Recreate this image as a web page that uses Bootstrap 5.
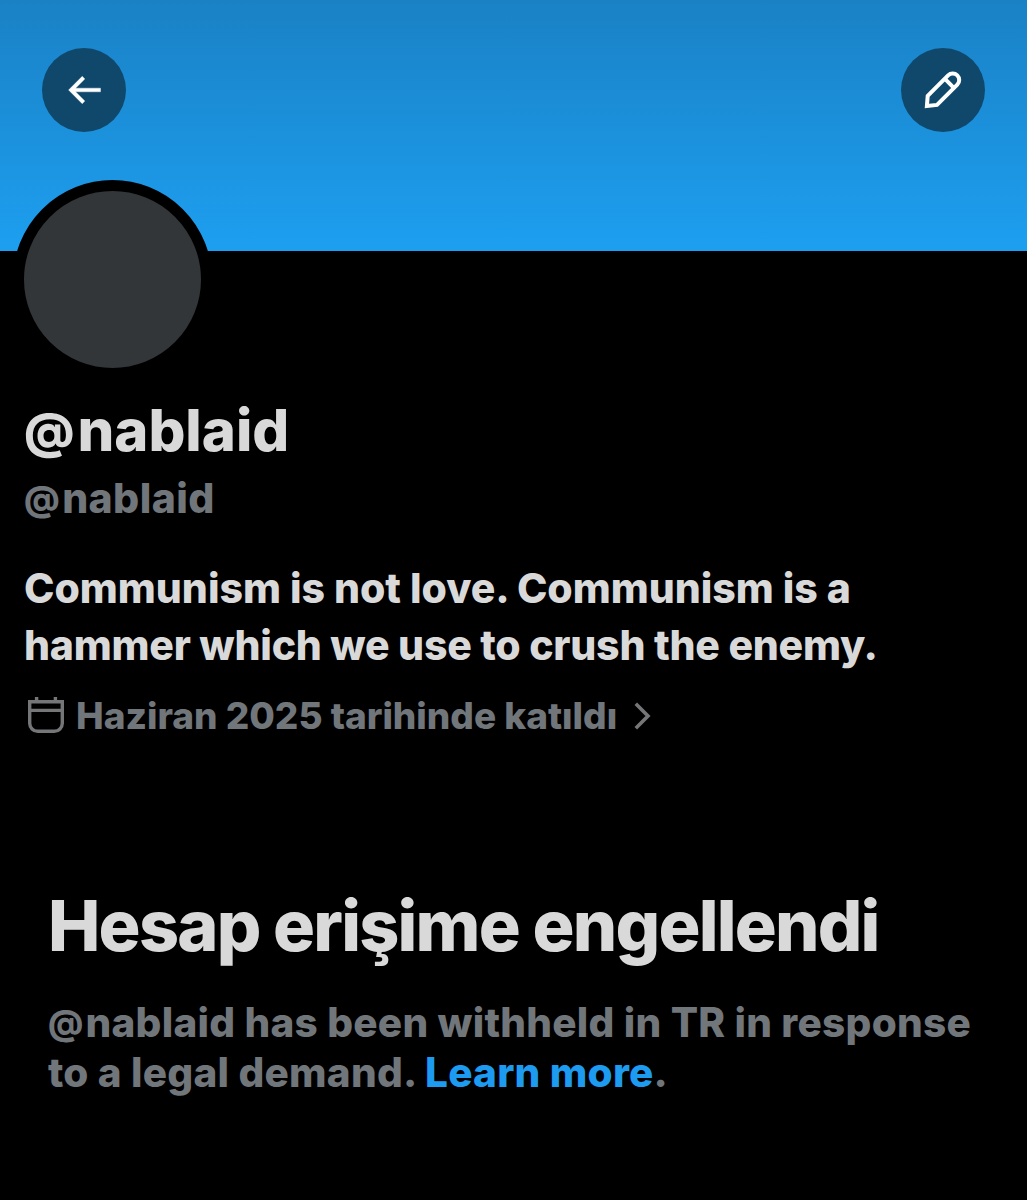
<!DOCTYPE html>
<html lang="tr">
<head>
<meta charset="utf-8">
<meta name="viewport" content="width=device-width, initial-scale=1">
<title>@nablaid</title>
<link rel="stylesheet" href="https://cdn.jsdelivr.net/npm/bootstrap@5.3.0/dist/css/bootstrap.min.css">
<style>
body{background:#000;color:#d9d9d9;font-family:Inter,"Liberation Sans",sans-serif;font-weight:800;min-height:1200px;overflow-x:hidden}
.banner{height:251px;padding:48px 42px;background:linear-gradient(#1a81c5,#1d9ff0)}
.round-btn{width:84px;height:84px;background:#10486b;border:0;padding:0}
.avatar{width:199px;height:199px;border:11px solid #000;background:#323638;margin:-71px 0 0 13px}
.profile{padding:16px 24px 0}
.at-sign{font-size:.84em;line-height:1;vertical-align:.06em;margin-right:.06em}
.t-name{font-size:58px;line-height:70px;font-weight:800}
.t-handle{font-size:41px;line-height:50px;margin-top:8px;letter-spacing:.4px}
.t-bio{font-size:41px;line-height:57px;margin-top:37px;letter-spacing:-.02px}
.t-bio .tight{letter-spacing:-.24px}
.t-joined{font-size:37px;line-height:46px;margin-top:19px;padding-left:4px}
.t-joined .date-text{margin:0 17px 0 12px}
.cal{margin-top:-2px}
.dim{color:#71767b}
.glyph{color:#747678}
.notice{padding:145px 48px 0}
.t-head{font-size:70px;line-height:84px;font-weight:800;letter-spacing:-1.78px}
.t-why{font-size:40.5px;line-height:50px;margin-top:30px;letter-spacing:.26px}
.t-why a{color:#1d9bf0}
.ln{white-space:nowrap}
</style>
</head>
<body>
<header class="banner d-flex justify-content-between align-items-start">
<button class="round-btn rounded-circle d-flex align-items-center justify-content-center" aria-label="Geri">
<svg width="44" height="44" viewBox="0 0 24 24" fill="#fff" stroke="#fff" stroke-width=".2"><path d="M7.414 13l5.043 5.04-1.414 1.42L3.586 12l7.457-7.46 1.414 1.42L7.414 11H21v2H7.414z"/></svg>
</button>
<button class="round-btn rounded-circle d-flex" aria-label="Düzenle">
<svg width="84" height="84" viewBox="0.6 0 84 84" fill="none" stroke="#fff" stroke-width="4"><path d="M26.5 58 27.3 47.8 47.7 27.4a6.5 6.5 0 0 1 9.2 9.2L36.6 56.9ZM44.3 30.7 53.7 40.1"/></svg>
</button>
</header>
<div class="avatar rounded-circle"></div>
<main>
<section class="profile">
<h1 class="t-name mb-0"><span class="at-sign">@</span>nablaid</h1>
<div class="t-handle dim"><span class="at-sign">@</span>nablaid</div>
<div class="t-bio"><span class="ln">Communism is not love. Communism is a</span><br><span class="ln tight">hammer which we use to crush the enemy.</span></div>
<div class="t-joined dim d-flex align-items-center">
<svg class="cal glyph flex-shrink-0" width="36" height="36" viewBox="0 0 36 36" fill="none" stroke="currentColor" stroke-width="3.4"><path d="M1.7 4.7H34.3V26.3a8 8 0 0 1-8 8H9.7a8 8 0 0 1-8-8ZM1.7 13.4H34.3M8.6 0V4M27.4 0V4"/></svg>
<span class="date-text ln">Haziran 2025 tarihinde katıldı</span>
<svg class="glyph flex-shrink-0" width="17" height="28" viewBox="0 0 17 28" fill="none" stroke="currentColor" stroke-width="3.6"><path d="M1.8 1.8 14 14 1.8 26.2"/></svg>
</div>
</section>
<section class="notice">
<h2 class="t-head mb-0 ln">Hesap erişime engellendi</h2>
<p class="t-why dim mb-0"><span class="ln"><span class="at-sign">@</span>nablaid has been withheld in TR in response</span><br><span class="ln">to a legal demand. <a class="text-decoration-none" href="#">Learn more</a>.</span></p>
</section>
</main>
<script src="https://cdn.jsdelivr.net/npm/bootstrap@5.3.0/dist/js/bootstrap.bundle.min.js"></script>
</body>
</html>
